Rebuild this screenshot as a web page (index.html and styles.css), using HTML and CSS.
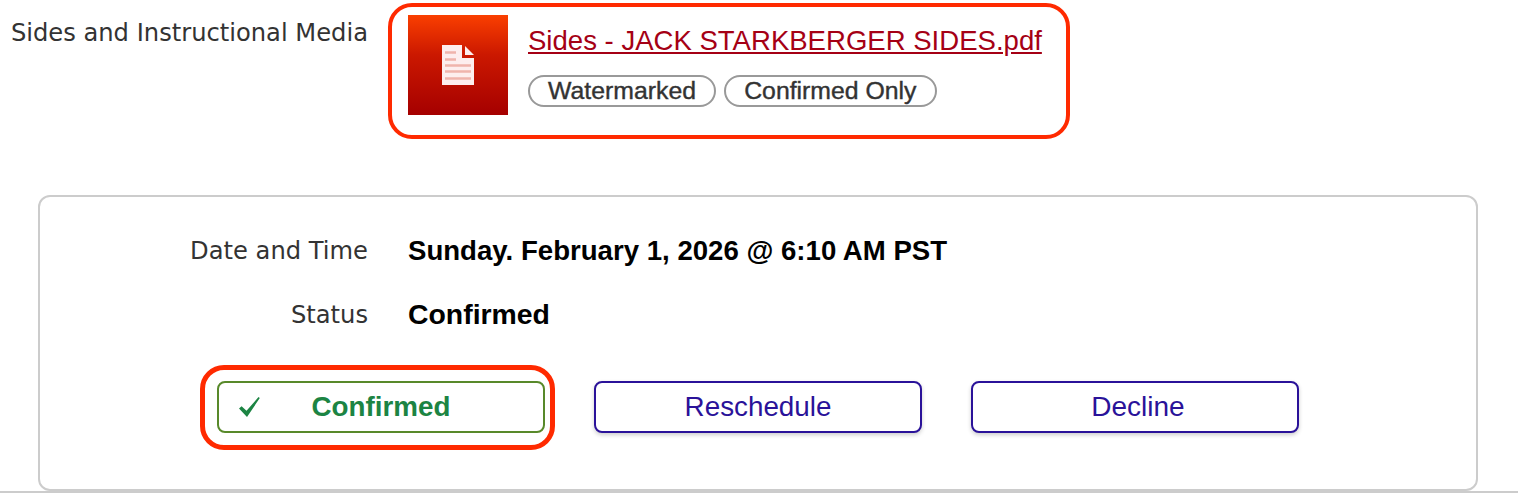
FILE: index.html
```html
<!DOCTYPE html>
<html lang="en">
<head>
<meta charset="utf-8">
<title>Sides and Status</title>
<link rel="stylesheet" href="styles.css">
</head>
<body>
<section class="media-row">
  <div class="media-label">Sides and Instructional Media</div>
  <div class="media-box">
    <div class="thumb">
      <svg class="doc-icon" width="34" height="42" viewBox="0 0 34 42" aria-hidden="true">
        <path class="doc-page" d="M1 1h20v13h12v27H1z"/>
        <path class="doc-fold" d="M24 2l9 9h-9z"/>
        <path class="doc-lines" d="M4 8.500h11M4 15.500h11M4 21.500h26M4 27.500h26M4 34.500h26"/>
      </svg>
    </div>
    <div class="media-info">
      <a class="file-link" href="#">Sides - JACK STARKBERGER SIDES.pdf</a>
      <div class="tags">
        <span class="tag">Watermarked</span>
        <span class="tag">Confirmed Only</span>
      </div>
    </div>
  </div>
</section>
<section class="card">
  <div class="field">
    <div class="field-label">Date and Time</div>
    <div class="field-value">Sunday. February 1, 2026 @ 6:10 AM PST</div>
  </div>
  <div class="field">
    <div class="field-label">Status</div>
    <div class="field-value field-value-status">Confirmed</div>
  </div>
  <div class="actions">
    <div class="highlight">
      <button class="btn btn-confirmed" type="button">
        <svg class="check" width="22" height="20" viewBox="0 0 22 20" aria-hidden="true"><path d="M0 11.500l2.600-2.300 4.900 4.600L19.500 0l1.300 1L8 20z"/></svg>
        Confirmed
      </button>
    </div>
    <button class="btn" type="button">Reschedule</button>
    <button class="btn btn-decline" type="button">Decline</button>
  </div>
</section>
<div class="page-rule"></div>
</body>
</html>
```
FILE: styles.css
```css
* { box-sizing: border-box; }
html, body { margin: 0; padding: 0; background: #fff; }
body { width: 1518px; height: 494px; overflow: hidden; font-family: "Liberation Sans", Arial, sans-serif; color: #333; }

.media-row { display: flex; height: 195px; padding-top: 3px; align-items: flex-start; }
.media-label { width: 368px; padding-top: 17px; text-align: right; font-family: "DejaVu Sans", Verdana, sans-serif; font-size: 24.200px; line-height: 26px; color: #333; white-space: nowrap; }
.media-box { display: flex; gap: 20px; width: 682px; height: 136px; margin-left: 20px; padding: 8px 16px; border: 4px solid #ff2a00; border-radius: 24px; }
.thumb { display: flex; align-items: center; justify-content: center; flex: none; width: 100px; height: 100px; background: linear-gradient(#fa3f00, #cb1800 40%, #a50000 100%); }
.doc-icon { display: block; filter: blur(.6px); }
.doc-page { fill: #fdeeee; }
.doc-fold { fill: #fdeeee; }
.doc-lines { fill: none; stroke: #efb4ac; stroke-width: 2.500; }
.media-info { display: flex; flex-direction: column; align-items: flex-start; padding-top: 9px; }
.file-link { font-size: 27.550px; line-height: 34px; color: #a50015; text-decoration: underline; white-space: nowrap; }
.tags { display: flex; gap: 8px; margin-top: 17px; }
.tag { height: 32px; padding: 0 18.100px; border: 2px solid #999; border-radius: 16px; font-size: 24.800px; line-height: 28px; color: #333; -webkit-text-stroke: .4px #333; white-space: nowrap; }

.card { width: 1440px; height: 296px; margin-left: 38px; padding-top: 34px; border: 2px solid #ccc; border-radius: 12px; background: #fff; }
.field { display: flex; height: 64px; gap: 40px; }
.field-label { width: 328px; padding-top: 1px; text-align: right; font-family: "DejaVu Sans", Verdana, sans-serif; font-size: 24.200px; line-height: 38px; color: #333; }
.field-value { padding-top: 1px; font-size: 27.600px; line-height: 38px; font-weight: 700; color: #000; }
.field-value-status { padding-top: 0; font-size: 28.400px; }
.actions { display: flex; align-items: flex-start; margin-top: 6px; padding-left: 160px; gap: 49px; }
.highlight { display: flex; align-items: flex-start; flex: none; width: 355px; height: 85px; margin-right: -10px; padding: 11px 0 0 12px; border: 5px solid #ff2a00; border-radius: 24px; }
.btn { position: relative; display: block; flex: none; width: 328px; height: 52px; margin-top: 16px; padding: 0; border: 2px solid #2a1299; border-radius: 8px; background: #fff; box-shadow: 0 2px 4px rgba(0,0,0,.2); font-family: "Liberation Sans", Arial, sans-serif; font-size: 27.800px; color: #2a1299; }
.btn-confirmed { margin-top: 0; border-color: #58892a; box-shadow: none; font-weight: 700; color: #1c8443; }
.btn-decline { padding-left: 6px; font-size: 28px; }
.check { position: absolute; left: 20px; top: 14px; fill: #1c8443; }
.page-rule { height: 2px; background: #ccc; }
```
